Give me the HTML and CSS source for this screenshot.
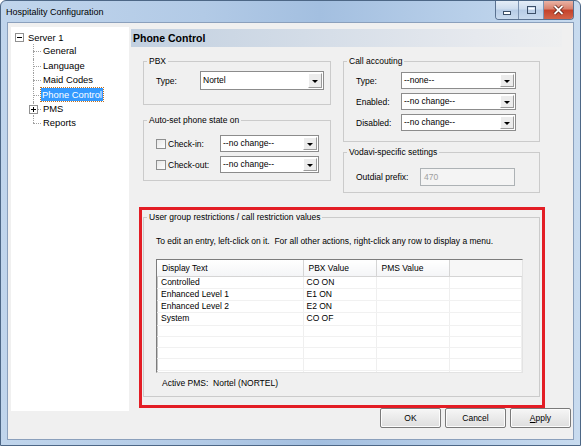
FILE: index.html
```html
<!doctype html>
<html>

<head>
    <title>Hospitality Configuration</title>
    <meta charset="utf-8">
    <link rel="stylesheet" href="styles.css">
</head>

<body>
    <div class="window">
        <div class="titlebar">
            <span class="title">Hospitality Configuration</span>
            <div class="capbtns">
                <div class="cap capmin">
                    <svg width="22" height="18" viewBox="0 0 22 18"><rect x="7.5" y="10.5" width="7" height="3" fill="#fff" stroke="#3c4f68"/></svg>
                </div>
                <div class="cap capmax">
                    <svg width="24" height="18" viewBox="0 0 24 18"><rect x="8.5" y="5.5" width="8" height="7" fill="none" stroke="#3c4f68"/><rect x="9.5" y="7" width="6" height="1.5" fill="#fff"/></svg>
                </div>
                <div class="cap capclose">
                    <svg width="29" height="18" viewBox="0 0 29 18"><path d="M10.5 5 L18.5 13 M18.5 5 L10.5 13" stroke="#5a1a10" stroke-width="3.4"/><path d="M10.5 5 L18.5 13 M18.5 5 L10.5 13" stroke="#fff" stroke-width="1.8"/></svg>
                </div>
            </div>
        </div>

        <div class="client">
            <div class="main">
                <div class="tree">
                    <div class="troot">
                        <svg class="tbox" width="9" height="9" viewBox="0 0 9 9"><rect x="0.5" y="0.5" width="8" height="8" fill="#fff" stroke="#919191"/><path d="M2 4.5 H7" stroke="#000"/></svg>
                        <span>Server 1</span>
                    </div>
                    <ul class="tchildren">
                        <li><span>General</span></li>
                        <li><span>Language</span></li>
                        <li><span>Maid Codes</span></li>
                        <li><span class="tsel">Phone Control</span></li>
                        <li class="haskids">
                            <svg class="tplus" width="9" height="9" viewBox="0 0 9 9"><rect x="0.5" y="0.5" width="8" height="8" fill="#fff" stroke="#919191"/><path d="M2 4.5 H7 M4.5 2 V7" stroke="#000"/></svg>
                            <span>PMS</span>
                        </li>
                        <li><span>Reports</span></li>
                    </ul>
                </div>

                <div class="panel">
                    <div class="panelhead">Phone Control</div>

                    <div class="topgrid">
                        <div class="col">
                            <fieldset class="grp pbx">
                                <legend>PBX</legend>
                                <div class="row">
                                    <span class="lbl w44">Type:</span>
                                    <div class="select w124 h19"><span>Nortel</span><i class="arrow"></i></div>
                                </div>
                            </fieldset>
                            <fieldset class="grp autoset">
                                <legend>Auto-set phone state on</legend>
                                <div class="row">
                                    <span class="chk"></span>
                                    <span class="lbl w52">Check-in:</span>
                                    <div class="select w99"><span>--no change--</span><i class="arrow"></i></div>
                                </div>
                                <div class="row">
                                    <span class="chk"></span>
                                    <span class="lbl w52">Check-out:</span>
                                    <div class="select w99"><span>--no change--</span><i class="arrow"></i></div>
                                </div>
                            </fieldset>
                        </div>
                        <div class="col">
                            <fieldset class="grp callacc">
                                <legend>Call accouting</legend>
                                <div class="row">
                                    <span class="lbl w45">Type:</span>
                                    <div class="select w115"><span>--none--</span><i class="arrow"></i></div>
                                </div>
                                <div class="row">
                                    <span class="lbl w45">Enabled:</span>
                                    <div class="select w115"><span>--no change--</span><i class="arrow"></i></div>
                                </div>
                                <div class="row">
                                    <span class="lbl w45">Disabled:</span>
                                    <div class="select w115"><span>--no change--</span><i class="arrow"></i></div>
                                </div>
                            </fieldset>
                            <fieldset class="grp vodavi">
                                <legend>Vodavi-specific settings</legend>
                                <div class="row">
                                    <span class="lbl w64">Outdial prefix:</span>
                                    <div class="textbox disabled">470</div>
                                </div>
                            </fieldset>
                        </div>
                    </div>

                    <div class="highlight">
                        <fieldset class="grp restrict">
                            <legend>User group restrictions / call restriction values</legend>
                            <div class="hint">To edit an entry, left-click on it.&nbsp; For all other actions, right-click any row to display a menu.</div>
                            <div class="listview">
                                <table>
                                    <colgroup>
                                        <col class="c1"><col class="c2"><col class="c3"><col>
                                    </colgroup>
                                    <tr><th>Display Text</th><th>PBX Value</th><th>PMS Value</th><th></th></tr>
                                    <tr><td>Controlled</td><td>CO ON</td><td></td><td></td></tr>
                                    <tr><td>Enhanced Level 1</td><td>E1 ON</td><td></td><td></td></tr>
                                    <tr><td>Enhanced Level 2</td><td>E2 ON</td><td></td><td></td></tr>
                                    <tr><td>System</td><td>CO OF</td><td></td><td></td></tr>
                                    <tr><td></td><td></td><td></td><td></td></tr>
                                    <tr><td></td><td></td><td></td><td></td></tr>
                                    <tr><td></td><td></td><td></td><td></td></tr>
                                    <tr><td></td><td></td><td></td><td></td></tr>
                                    <tr><td></td><td></td><td></td><td></td></tr>
                                </table>
                            </div>
                            <div class="activepms">Active PMS:&nbsp; Nortel (NORTEL)</div>
                        </fieldset>
                    </div>
                </div>
            </div>

            <div class="btns">
                <button>OK</button>
                <button>Cancel</button>
                <button><u>A</u>pply</button>
            </div>
        </div>
    </div>
</body>

</html>
```

FILE: styles.css
```css
* {
    box-sizing: border-box;
}

body {
    margin: 0;
    font-family: "Liberation Sans", Arial, sans-serif;
    font-size: 8.5px;
    color: #000;
}

.window {
    width: 581px;
    height: 446px;
    border: 1px solid #4d6786;
    border-radius: 6px 6px 0 0;
    background: linear-gradient(90deg, #c0d5ec 0%, #b2cae6 35%, #a3bfe0 55%, #b8cfe9 80%, #c8dbef 100%);
    display: flex;
    flex-direction: column;
    overflow: hidden;
}

/* title bar */
.titlebar {
    height: 21px;
    display: flex;
    align-items: flex-start;
}

.title {
    padding: 6px 0 0 5px;
    font-size: 9px;
    line-height: 11px;
}

.capbtns {
    margin-left: auto;
    margin-right: 6px;
    display: flex;
    border: 1px solid #5a7190;
    border-top: none;
    border-radius: 0 0 4px 4px;
    overflow: hidden;
}

.cap {
    height: 18px;
}

.cap svg {
    display: block;
}

.capmin,
.capmax {
    background: linear-gradient(#e4edf7 0%, #cddcee 45%, #b7cce6 50%, #c9daee 100%);
    border-right: 1px solid #7d93b1;
}

.capclose {
    background: linear-gradient(#eab3a5 0%, #d9806b 45%, #c5412a 50%, #d2644a 100%);
}

/* client area */
.client {
    flex: 1;
    margin: 0 6px 5px;
    border: 1px solid #8ba0bc;
    background: #f0f0f0;
    display: flex;
    flex-direction: column;
}

.main {
    display: flex;
    padding: 4px 0 0 3px;
    height: 388px;
}

/* tree */
.tree {
    width: 118px;
    height: 384px;
    background: #fff;
    padding-top: 3px;
    font-size: 9.4px;
}

.troot {
    height: 14.4px;
    display: flex;
    align-items: center;
    padding-left: 4px;
}

.tbox {
    margin-right: 4px;
}

.tchildren {
    list-style: none;
    margin: 0 0 0 22px;
    padding: 0;
}

.tchildren li {
    position: relative;
    height: 14.4px;
    line-height: 14.4px;
    padding-left: 10px;
}

.tchildren li::before {
    content: "";
    position: absolute;
    left: 0;
    top: 7px;
    width: 8px;
    border-top: 1px dotted #a0a0a0;
}

.tchildren li::after {
    content: "";
    position: absolute;
    left: 0;
    top: 0;
    height: 14.4px;
    border-left: 1px dotted #a0a0a0;
}

.tchildren li:last-child::after {
    height: 7px;
}

.tplus {
    position: absolute;
    left: -4px;
    top: 3px;
    z-index: 1;
}

.tsel {
    background: #3399ff;
    color: #fff;
    padding: 0 1px;
    margin-left: -2px;
    outline: 1px dotted #c07020;
    display: inline-block;
    line-height: 13px;
}

/* right panel */
.panel {
    flex: 1;
    margin: 0 11px 0 2px;
}

.panelhead {
    margin-top: 2px;
    height: 18px;
    line-height: 18px;
    padding-left: 2px;
    font-weight: bold;
    font-size: 10.5px;
    background: linear-gradient(90deg, #c2d0e0 0%, #d3dce7 40%, #e6e9ee 80%, #eeeff0 100%);
}

.topgrid {
    display: grid;
    grid-template-columns: 188px 197px;
    column-gap: 12px;
    margin: 9px 0 0 12px;
    align-items: start;
}

.col {
    display: flex;
    flex-direction: column;
}

fieldset.grp {
    --pl: 12px;
    margin: 0;
    border: 1px solid #cbcbcb;
    min-width: 0;
    padding-left: var(--pl);
    padding-right: 0;
    padding-bottom: 0;
}

fieldset.grp legend {
    padding: 0 2px;
    margin-left: calc(3px - var(--pl));
    line-height: 10px;
}

.pbx {
    --pl: 8px;
    height: 49px;
    padding-top: 5px;
}

.autoset {
    margin-top: 10px !important;
    height: 66px;
    padding-top: 10px;
    display: flex;
    flex-direction: column;
    gap: 4px;
}

.callacc {
    height: 86px;
    padding-top: 6px;
    display: flex;
    flex-direction: column;
    gap: 4px;
}

.vodavi {
    --pl: 11px;
    margin-top: 5px !important;
    height: 46px;
    padding-top: 11px;
}

.row {
    display: flex;
    align-items: center;
}

.lbl {
    line-height: 10px;
}

.w44 { width: 44px; }
.w45 { width: 45px; }
.w52 { width: 52px; }
.w64 { width: 64px; }

.select {
    display: flex;
    align-items: stretch;
    height: 17px;
    background: #fff;
    border: 1px solid #8c8c8c;
}

.select span {
    flex: 1;
    padding-left: 2px;
    line-height: 15px;
    white-space: nowrap;
    overflow: hidden;
}

.w124 { width: 124px; }
.w115 { width: 115px; }
.w99 { width: 99px; }
.h19 { height: 19px; }
.h19 span { line-height: 17px; }

.arrow {
    width: 14px;
    margin: 1px;
    background: #ececec;
    border: 1px solid;
    border-color: #fff #9a9a9a #9a9a9a #fff;
    display: flex;
    align-items: center;
    justify-content: center;
}

.arrow::before {
    content: "";
    border-left: 3px solid transparent;
    border-right: 3px solid transparent;
    border-top: 3px solid #000;
    margin-top: 1px;
}

.chk {
    width: 10px;
    height: 10px;
    border: 1px solid #8e8f8f;
    background: linear-gradient(135deg, #e6e6e6, #fff);
    margin-right: 2px;
}

.textbox {
    width: 95px;
    height: 18px;
    border: 1px solid #adb2b5;
    line-height: 16px;
    padding-left: 3px;
}

.disabled {
    background: #f4f4f4;
    color: #a0a0a0;
}

/* restrictions */
.highlight {
    margin: 14px 0 0 8px;
    width: 406px;
    height: 201px;
    border: 3px solid #e31d25;
    padding: 2px 0 0 1px;
}

.restrict {
    width: 397px;
    height: 185px;
    padding-top: 14px;
}

.hint {
    line-height: 10px;
    white-space: nowrap;
}

.listview {
    margin-top: 13px;
    width: 367px;
    height: 114px;
    background: #fff;
    border: 1px solid;
    border-color: #7c7c7c #e3e3e3 #e3e3e3 #7c7c7c;
    box-shadow: inset 1px 1px 0 #c4c4c4;
    overflow: hidden;
}

.listview table {
    width: 100%;
    border-collapse: collapse;
    table-layout: fixed;
}

.c1 { width: 146px; }
.c2 { width: 73px; }
.c3 { width: 73px; }

.listview th {
    height: 16px;
    font-weight: normal;
    text-align: left;
    padding: 0 0 0 5px;
    background: linear-gradient(#fff, #f4f5f7);
    border-right: 1px solid #d5d5d5;
    border-bottom: 1px solid #d5d5d5;
}

.listview th:last-child {
    border-right: none;
    background: #f7f7f7;
}

.listview td {
    height: 11.25px;
    line-height: 11.25px;
    padding: 0 0 0 4px;
    border-right: 1px solid #efefef;
    border-bottom: 1px solid #f1f1f1;
    white-space: nowrap;
    overflow: hidden;
}

.listview td:nth-child(2) {
    padding-left: 3px;
}

.activepms {
    margin: 5px 0 0 6px;
    line-height: 10px;
}

/* dialog buttons */
.btns {
    display: flex;
    justify-content: flex-end;
    gap: 4px;
    margin-top: -3px;
    padding-right: 2px;
}

.btns button {
    width: 61px;
    height: 20px;
    font-family: "Liberation Sans", Arial, sans-serif;
    font-size: 8.5px;
    color: #000;
    border: 1px solid #7a7a7a;
    border-radius: 2px;
    background: linear-gradient(#f6f6f6 0%, #eaeaea 50%, #dedede 100%);
    box-shadow: inset 0 0 0 1px #fcfcfc;
    padding: 0;
}
```
